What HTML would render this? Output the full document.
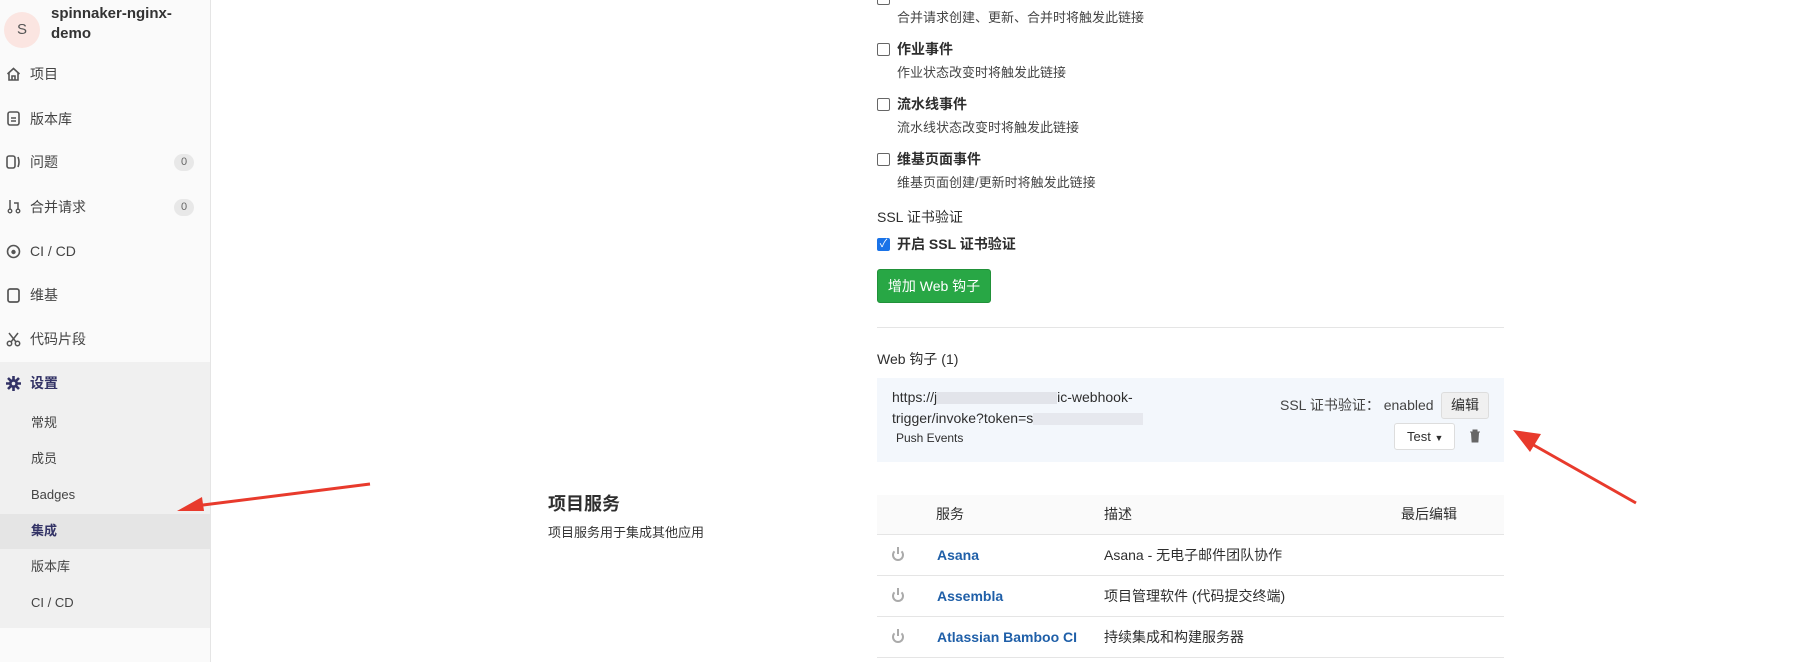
<!DOCTYPE html>
<html><head><meta charset="utf-8"><style>
*{box-sizing:border-box;margin:0;padding:0}
body{width:1794px;height:662px;overflow:hidden;background:#fff;font-family:"Liberation Sans","Noto Sans CJK SC",sans-serif;font-size:14px;color:#2e2e2e;position:relative}
.a{position:absolute;white-space:nowrap;line-height:1}
.sb{position:absolute;left:0;top:0;width:211px;height:662px;background:#fafafa;border-right:1px solid #e5e5e5}
.set{position:absolute;left:0;top:362px;width:210px;height:266px;background:#f0f0f0}
.hl{position:absolute;left:0;top:514px;width:210px;height:35px;background:#e5e5e5}
.nav{color:#444}
.badge{position:absolute;left:174px;width:20px;height:17px;border-radius:9px;background:#e8e8e8;color:#666;font-size:11px;text-align:center;line-height:17px}
.cb{position:absolute;left:877px;width:13px;height:13px;border:1px solid #666;border-radius:2px;background:#fff}
.b{font-weight:bold}
.g{color:#444}
.lnk{color:#1f5fa8;font-weight:bold}
.line{position:absolute;left:877px;width:627px;height:1px;background:#e5e5e5}
.pw{position:absolute;left:892px;width:12px;height:12px;border:2px solid #aaa;border-radius:50%;border-top-color:transparent}
.pw:after{content:"";position:absolute;left:3px;top:-4px;width:2px;height:7px;background:#aaa}
</style></head><body>
<div class="sb"></div>
<div class="set"></div>
<div class="hl"></div>
<div style="position:absolute;left:4px;top:12px;width:36px;height:36px;border-radius:50%;background:#fbe5e1;color:#555;text-align:center;line-height:36px;font-size:15px">S</div>
<div class="a b" style="left:51px;top:6px;font-size:15px;color:#333">spinnaker-nginx-</div>
<div class="a b" style="left:51px;top:26px;font-size:15px;color:#333">demo</div>

<svg style="position:absolute;left:6px;top:67px" width="15" height="14" viewBox="0 0 15 14"><path d="M1.5 7 7.5 1.5 13.5 7M3 6v7h9V6M6 13V9h3v4" fill="none" stroke="#555" stroke-width="1.6"/></svg>
<div class="a nav" style="left:30px;top:67px">项目</div>
<svg style="position:absolute;left:7px;top:111px" width="13" height="15"><rect x="1" y="1" width="11" height="13" rx="2" fill="none" stroke="#555" stroke-width="1.6"/><path d="M4 7h5M4 10h5" stroke="#555" stroke-width="1.4"/></svg>
<div class="a nav" style="left:30px;top:112px">版本库</div>
<svg style="position:absolute;left:6px;top:155px" width="15" height="14"><rect x="1" y="1" width="8" height="12" rx="2" fill="none" stroke="#555" stroke-width="1.6"/><path d="M12 2q2 5 0 10" fill="none" stroke="#555" stroke-width="1.6"/></svg>
<div class="a nav" style="left:30px;top:155px">问题</div>
<div class="badge" style="top:154px">0</div>
<svg style="position:absolute;left:7px;top:199px" width="14" height="15"><circle cx="3" cy="12" r="1.8" fill="none" stroke="#555" stroke-width="1.3"/><circle cx="11" cy="12" r="1.8" fill="none" stroke="#555" stroke-width="1.3"/><path d="M3 1v9M11 10V4H7" fill="none" stroke="#555" stroke-width="1.5"/></svg>
<div class="a nav" style="left:30px;top:200px">合并请求</div>
<div class="badge" style="top:199px">0</div>
<svg style="position:absolute;left:6px;top:244px" width="15" height="15"><circle cx="7.5" cy="7.5" r="6" fill="none" stroke="#555" stroke-width="1.6"/><circle cx="7.5" cy="8" r="2.2" fill="#555"/></svg>
<div class="a nav" style="left:30px;top:244px">CI / CD</div>
<svg style="position:absolute;left:7px;top:288px" width="13" height="15"><rect x="1" y="1" width="11" height="13" rx="2" fill="none" stroke="#555" stroke-width="1.7"/></svg>
<div class="a nav" style="left:30px;top:288px">维基</div>
<svg style="position:absolute;left:6px;top:332px" width="15" height="15"><circle cx="3.5" cy="11.5" r="2.2" fill="none" stroke="#555" stroke-width="1.5"/><circle cx="11.5" cy="11.5" r="2.2" fill="none" stroke="#555" stroke-width="1.5"/><path d="M3 1l7 9M12 1 5 10" stroke="#555" stroke-width="1.5"/></svg>
<div class="a nav" style="left:30px;top:332px">代码片段</div>
<svg style="position:absolute;left:6px;top:376px" width="15" height="15" viewBox="0 0 15 15"><circle cx="7.5" cy="7.5" r="4.5" fill="#333366"/><path d="M7.5 0v15M0 7.5h15M2 2l11 11M13 2 2 13" stroke="#333366" stroke-width="2.6"/><circle cx="7.5" cy="7.5" r="1.8" fill="#f0f0f0"/></svg>
<div class="a b" style="left:30px;top:376px;color:#333366">设置</div>
<div class="a nav" style="left:31px;top:416px;font-size:13px">常规</div>
<div class="a nav" style="left:31px;top:452px;font-size:13px">成员</div>
<div class="a nav" style="left:31px;top:488px;font-size:13px">Badges</div>
<div class="a b" style="left:31px;top:524px;font-size:13px;color:#333366">集成</div>
<div class="a nav" style="left:31px;top:560px;font-size:13px">版本库</div>
<div class="a nav" style="left:31px;top:596px;font-size:13px">CI / CD</div>

<div class="a g" style="left:897px;top:11px;font-size:13px">合并请求创建、更新、合并时将触发此链接</div>
<div class="cb" style="top:-8px"></div>
<div class="cb" style="top:43px"></div><div class="a b" style="left:897px;top:42px">作业事件</div>
<div class="a g" style="left:897px;top:66px;font-size:13px">作业状态改变时将触发此链接</div>
<div class="cb" style="top:98px"></div><div class="a b" style="left:897px;top:97px">流水线事件</div>
<div class="a g" style="left:897px;top:121px;font-size:13px">流水线状态改变时将触发此链接</div>
<div class="cb" style="top:153px"></div><div class="a b" style="left:897px;top:152px">维基页面事件</div>
<div class="a g" style="left:897px;top:176px;font-size:13px">维基页面创建/更新时将触发此链接</div>
<div class="a" style="left:877px;top:210px">SSL 证书验证</div>
<div style="position:absolute;left:877px;top:238px;width:13px;height:13px;border-radius:2px;background:#1a73e8;color:#fff;font-size:11px;line-height:13px;text-align:center">✓</div>
<div class="a b" style="left:897px;top:237px">开启 SSL 证书验证</div>
<div style="position:absolute;left:877px;top:269px;width:114px;height:34px;background:#28a745;border:1px solid #219139;border-radius:3px;color:#fff;font-size:14px;line-height:32px;text-align:center">增加 Web 钩子</div>
<div class="line" style="top:327px"></div>

<div class="a" style="left:877px;top:352px">Web 钩子 (1)</div>
<div style="position:absolute;left:877px;top:378px;width:627px;height:84px;background:#f3f7fc"></div>
<div class="a" style="left:892px;top:390px">https://j<span style="display:inline-block;width:120px;height:12px;background:#e2e4ea;vertical-align:middle"></span>ic-webhook-</div>
<div class="a" style="left:892px;top:411px">trigger/invoke?token=s<span style="display:inline-block;width:110px;height:12px;background:#e6e8ee;vertical-align:middle"></span></div>
<div class="a" style="left:896px;top:432px;font-size:12px">Push Events</div>
<div class="a" style="left:1280px;top:398px;font-size:14px;color:#444">SSL 证书验证： enabled</div>
<div style="position:absolute;left:1441px;top:392px;width:48px;height:27px;background:#f0f0f0;border:1px solid #ddd;border-radius:3px;text-align:center;line-height:25px">编辑</div>
<div style="position:absolute;left:1394px;top:423px;width:61px;height:27px;background:#fff;border:1px solid #ddd;border-radius:3px;line-height:25px;padding-left:12px;font-size:13px">Test <span style="font-size:9px">▼</span></div>
<svg style="position:absolute;left:1469px;top:429px" width="12" height="14"><path d="M1 3h10M4 3V1h4v2M2.5 4h7l-.6 9h-5.8z" fill="#666" stroke="#666" stroke-width="1"/></svg>

<div class="a b" style="left:548px;top:495px;font-size:18px">项目服务</div>
<div class="a" style="left:548px;top:526px;font-size:13px;color:#333">项目服务用于集成其他应用</div>

<div style="position:absolute;left:877px;top:495px;width:627px;height:39px;background:#fafafa"></div>
<div class="a" style="left:936px;top:507px">服务</div>
<div class="a" style="left:1104px;top:507px">描述</div>
<div class="a" style="left:1401px;top:507px">最后编辑</div>
<div class="line" style="top:534px"></div>
<div class="pw" style="top:549px"></div><div class="a lnk" style="left:937px;top:548px">Asana</div><div class="a" style="left:1104px;top:548px">Asana - 无电子邮件团队协作</div>
<div class="line" style="top:575px"></div>
<div class="pw" style="top:590px"></div><div class="a lnk" style="left:937px;top:589px">Assembla</div><div class="a" style="left:1104px;top:589px">项目管理软件 (代码提交终端)</div>
<div class="line" style="top:616px"></div>
<div class="pw" style="top:631px"></div><div class="a lnk" style="left:937px;top:630px">Atlassian Bamboo CI</div><div class="a" style="left:1104px;top:630px">持续集成和构建服务器</div>
<div class="line" style="top:657px"></div>

<svg style="position:absolute;left:0;top:0" width="1794" height="662">
<path d="M370 484 L195 506" stroke="#e83a2c" stroke-width="3"/>
<path d="M177 511 L202 497 L204 511 z" fill="#e83a2c"/>
<path d="M1636 503 L1530 443" stroke="#e83a2c" stroke-width="3"/>
<path d="M1513 430 L1541 434 L1530 452 z" fill="#e83a2c"/>
</svg>
</body></html>
